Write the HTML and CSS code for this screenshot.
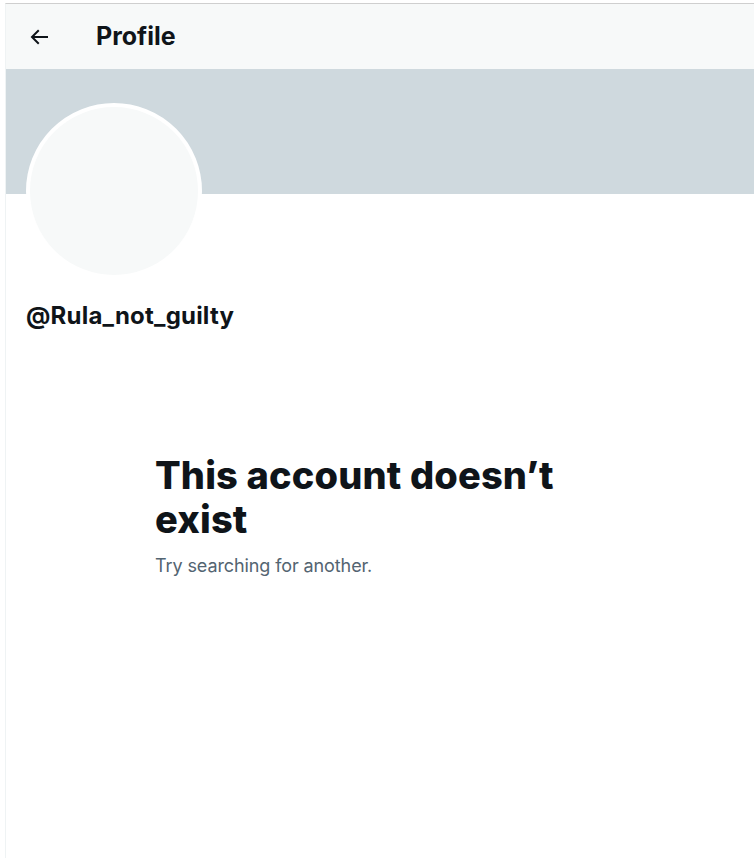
FILE: index.html
```html
<!DOCTYPE html>
<html lang="en">
<head>
	<meta charset="UTF-8">
	<title>Profile</title>
	<link rel="stylesheet" href="styles.css">
</head>
<body>
	<div class="page">
		<div class="column">
			<div class="top">
				<a class="back" href="javascript:void(0)">
					<svg viewBox="0 0 24 24" width="24" height="24"><path d="M7.414 13l5.043 5.04-1.414 1.42L3.586 12l7.457-7.46 1.414 1.42L7.414 11H21v2H7.414z"/></svg>
				</a>
				<h2 class="title">Profile</h2>
			</div>
			<div class="banner"></div>
			<div class="info">
				<div class="avatar"></div>
				<p class="handle">@Rula_not_guilty</p>
			</div>
			<div class="empty">
				<p class="empty_title">This account doesn’t exist</p>
				<p class="empty_txt">Try searching for another.</p>
			</div>
		</div>
	</div>
</body>
</html>
```

FILE: styles.css
```css
html,body{margin: 0; padding: 0; background: #fff;}
body,div,p,h2,a{font-family: Inter, "Liberation Sans", Arial, sans-serif;}
h2,p{margin: 0;}
.page{padding-top: 3px; height: 858px; box-sizing: border-box;}
.column{margin-left: 5px; height: 100%; border-top: 1px solid #cfcfcf; border-left: 1px solid #eff3f4;}
.top{display: flex; align-items: center; height: 65px; background: #f7f9f9;}
.back{display: flex; width: 24px; height: 24px; margin-left: 21px; color: #0f1419;}
.back svg{fill: #0f1419;}
.title{margin-left: 45px; padding-bottom: 2px; font-size: 25px; line-height: 30px; font-weight: 700; color: #0f1419;}
.banner{height: 125px; background: #cfd9de;}
.info{padding: 0 20px;}
.avatar{width: 168px; height: 168px; margin-top: -91px; border: 4px solid #fff; border-radius: 50%; background: #f7f9f9;}
.handle{margin-top: 23px; font-size: 24px; line-height: 28px; font-weight: 700; color: #0f1419; letter-spacing: 0.2px;}
.empty{width: 450px; margin: 123px auto 0;}
.empty_title{font-size: 38px; line-height: 44px; font-weight: 800; color: #0f1419; letter-spacing: 0.15px;}
.empty_txt{margin-top: 14px; font-size: 18px; line-height: 22px; color: #536471; letter-spacing: -0.1px;}
```
